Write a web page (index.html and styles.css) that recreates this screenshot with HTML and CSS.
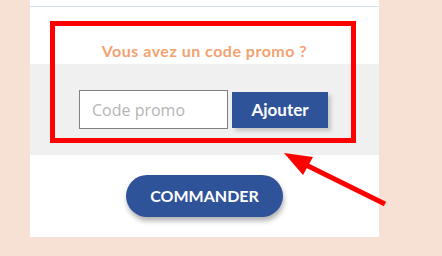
FILE: index.html
```html
<!DOCTYPE html>
<html lang="fr">
<head>
<meta charset="utf-8">
<link rel="stylesheet" href="styles.css">
</head>
<body>
<div class="panel">
  <div class="top"></div>
  <div class="promo">
    <h2 class="promo-title">Vous avez un code promo ?</h2>
    <div class="promo-band">
      <input class="promo-input" type="text" placeholder="Code promo">
      <button class="promo-btn">Ajouter</button>
    </div>
  </div>
  <div class="order">
    <button class="order-btn">COMMANDER</button>
  </div>
</div>
<div class="highlight"></div>
<svg class="arrow" width="442" height="256" viewBox="0 0 442 256">
  <line x1="385" y1="204" x2="300" y2="162" stroke="#ff0000" stroke-width="5"/>
  <polygon points="284,153 313,157 303,175" fill="#ff0000"/>
</svg>
</body>
</html>
```
FILE: styles.css
```css
html, body {
  margin: 0;
  padding: 0;
}
body {
  background: #f7e0d4;
  width: 442px;
  height: 256px;
  position: relative;
  overflow: hidden;
  font-family: Lato, "Open Sans", sans-serif;
}
.panel {
  margin-left: 30px;
  width: 349px;
  height: 237px;
  background: #ffffff;
  display: flex;
  flex-direction: column;
}
.top {
  height: 6px;
  border-bottom: 1px solid #d3e2ea;
}
.promo {
  display: flex;
  flex-direction: column;
}
.promo-title {
  margin: 0;
  height: 57px;
  box-sizing: border-box;
  padding-top: 35px;
  text-align: center;
  font-size: 16px;
  line-height: 18px;
  letter-spacing: 0.5px;
  font-weight: 700;
  color: #f2a271;
}
.promo-band {
  background: #f0f0f0;
  height: 91px;
  display: flex;
  align-items: center;
  justify-content: center;
  gap: 4px;
  padding-right: 2px;
}
.promo-input {
  width: 149px;
  height: 39px;
  box-sizing: border-box;
  border: 1px solid #808080;
  background: #ffffff;
  padding: 0 12px;
  font-family: "Open Sans", sans-serif;
  font-size: 16px;
  color: #333;
  outline: none;
  margin: 0;
}
.promo-input::placeholder {
  color: #b5b5b5;
}
.promo-btn {
  width: 96px;
  height: 36px;
  margin: 0;
  border: none;
  background: #2e5399;
  color: #ffffff;
  font-family: Lato, sans-serif;
  font-weight: 700;
  font-size: 17px;
  box-shadow: 3px 3px 4px rgba(0, 0, 0, 0.18);
}
.order {
  flex: 1;
  display: flex;
  justify-content: center;
  padding-top: 20px;
}
.order-btn {
  width: 157px;
  height: 42px;
  margin: 0;
  padding-bottom: 3px;
  border: none;
  border-radius: 21px;
  background: #2e5399;
  color: #ffffff;
  font-family: Lato, sans-serif;
  font-weight: 700;
  font-size: 16px;
  box-shadow: 1px 4px 5px rgba(0, 0, 0, 0.3);
}
.highlight {
  position: absolute;
  left: 50px;
  top: 21px;
  width: 306px;
  height: 122px;
  box-sizing: border-box;
  border: 5px solid #ff0000;
}
.arrow {
  position: absolute;
  left: 0;
  top: 0;
}
```
